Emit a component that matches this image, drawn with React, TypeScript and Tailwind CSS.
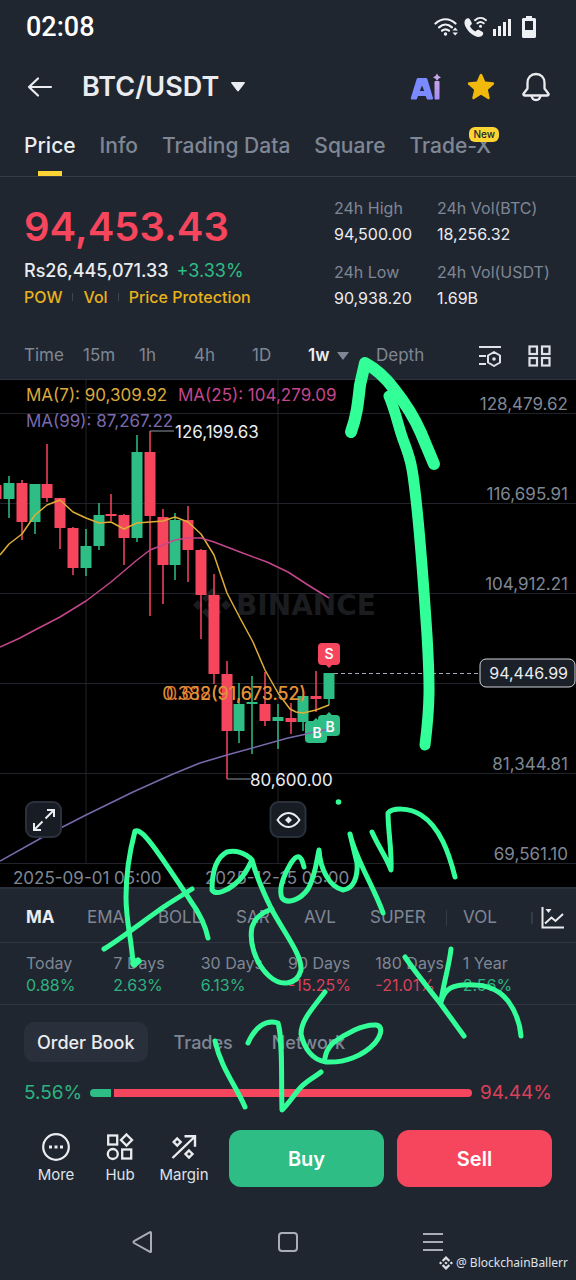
import { useState } from 'react'
import clsx from 'clsx'

interface Candle {
  up: boolean
  high: number
  top: number
  bottom: number
  low: number
}

// [direction, high, body top, body bottom, low]
const RAW: [string, number, number, number, number][] = [
  ['d', 105, 105, 119, 119],
  ['u', 96, 103, 119, 138],
  ['d', 100, 103, 142, 160],
  ['u', 104, 104, 142, 154],
  ['d', 64, 104, 118, 122],
  ['d', 118, 118, 148, 169],
  ['d', 147, 148, 188, 195],
  ['u', 149, 166, 188, 196],
  ['u', 123, 135, 166, 170],
  ['d', 114, 134, 136, 141],
  ['d', 134, 135, 158, 185],
  ['u', 55, 72, 158, 162],
  ['d', 51, 72, 136, 236],
  ['d', 129, 137, 185, 224],
  ['u', 133, 140, 185, 200],
  ['d', 126, 140, 170, 202],
  ['d', 169, 170, 215, 259],
  ['d', 194, 215, 294, 304],
  ['d', 281, 294, 351, 399],
  ['u', 303, 324, 351, 363],
  ['u', 296, 322, 324, 374],
  ['d', 292, 324, 341, 346],
  ['u', 324, 337, 341, 369],
  ['d', 323, 338, 342, 354],
  ['u', 316, 316, 342, 351],
  ['d', 291, 316, 319, 332],
  ['u', 293, 293, 319, 325],
]

const CANDLES: Candle[] = RAW.map(([dir, high, top, bottom, low]) => ({ up: dir === 'u', high, top, bottom, low }))

const MA7 =
  '0,175 9,164 22,154 35,135 47,125 60,120 73,132 86,138 99,143 111,142 124,149 137,143 150,142 163,141 175,137 188,142 201,154 214,175 227,213 240,238 253,262 265,290 278,313 290,329 296,332 303,333 316,330 329,325'
const MA25 =
  '0,267 20,258 35,250 60,237 86,221 111,202 124,191 137,180 150,170 163,165 175,160 188,158 201,158 214,162 240,172 267,182 288,192 308,205 329,218'
const MA99 = '0,481 43,457 86,435 133,412 173,394 200,383 227,375 288,358 316,352 329,349'

const GRID = [
  { y: 33, label: '128,479.62' },
  { y: 123, label: '116,695.91' },
  { y: 213, label: '104,912.21' },
  { y: 303, label: '' },
  { y: 393, label: '81,344.81' },
  { y: 483, label: '69,561.10' },
]

const TABS = ['Price', 'Info', 'Trading Data', 'Square', 'Trade-X']
const INTERVALS = ['Time', '15m', '1h', '4h', '1D', '1w', 'Depth']
const INDICATORS = ['MA', 'EMA', 'BOLL', 'SAR', 'AVL', 'SUPER']
const BOOK_TABS = ['Order Book', 'Trades', 'Network']

const STATS = [
  ['24h High', '94,500.00'],
  ['24h Vol(BTC)', '18,256.32'],
  ['24h Low', '90,938.20'],
  ['24h Vol(USDT)', '1.69B'],
]

const RETURNS = [
  ['Today', '0.88%'],
  ['7 Days', '2.63%'],
  ['30 Days', '6.13%'],
  ['90 Days', '-15.25%'],
  ['180 Days', '-21.01%'],
  ['1 Year', '2.56%'],
]

function StatusBar() {
  return (
    <div className="flex h-[54px] items-center justify-between pl-[26px] pr-10">
      <span className="font-['Roboto',sans-serif] text-[27px] font-medium text-white">02:08</span>
      <div className="flex items-center gap-[6px] text-[#eef0f4]">
        <svg width="24" height="20" viewBox="0 0 24 20" fill="none" stroke="currentColor" strokeWidth="2.2" strokeLinecap="round">
          <path d="M1.5 6.5C7.5.8 15.5.8 21.5 6.5" />
          <path d="M5 10.3c4-3.5 9-3.5 13 0" />
          <path d="M8 13.7c2.2-1.8 4.8-1.8 7 0" />
          <circle cx="11.5" cy="17" r="1.7" fill="currentColor" stroke="none" />
          <path d="m18.5 13.500 2.700-3 2.700 3zM18.500 15.500l2.700 3 2.700-3z" fill="currentColor" stroke="none" />
        </svg>
        <svg width="23" height="22" viewBox="0 0 23 22" fill="none">
          <path
            d="M1.800 3.200C3 2 5 1.800 5.800 3.200l1.800 3.300c.5 1 .2 1.800-.7 2.600l-1 .9c1.200 2.400 3.100 4.300 5.600 5.500l1-1c.8-.8 1.700-1 2.600-.5l3.200 1.800c1.300.8 1.200 2.600 0 3.800-1.800 1.800-4.500 1.800-7.300.5C6.800 18.100 3 14.300 1.200 10 .100 7.200.200 4.800 1.800 3.200z"
            fill="currentColor"
          />
          <path d="M11 4.200c3.300-3 7.700-3 11 0M13.400 7.300c2-1.700 4.300-1.700 6.300 0" stroke="currentColor" strokeWidth="1.9" strokeLinecap="round" />
          <circle cx="16.5" cy="10.2" r="1.5" fill="currentColor" />
        </svg>
        <svg width="19" height="18" viewBox="0 0 19 18" fill="currentColor">
          <path d="M0 11h3v7H0zM5 8h3v10H5zM10 4h3v14h-3zM15 1h3v17h-3z" />
        </svg>
        <svg className="ml-1" width="14" height="22" viewBox="0 0 14 22" fill="currentColor">
          <path fillRule="evenodd" d="M4 0h6v2h2.500c.8 0 1.500.7 1.500 1.500v17c0 .8-.7 1.500-1.500 1.500h-11C.700 22 0 21.300 0 20.500v-17C0 2.700.700 2 1.500 2H4zM3 5v9h8V5z" />
        </svg>
      </div>
    </div>
  )
}

function Header() {
  return (
    <header className="flex h-[66px] items-center pl-[27px] pr-[26px]">
      <button aria-label="Back" className="mr-[29px]">
        <svg width="26" height="22" viewBox="0 0 26 22" fill="none" stroke="#eaecef" strokeWidth="2.2" strokeLinecap="round" strokeLinejoin="round">
          <path d="M2 11h22M11 2.500 2 11l9 8.500" />
        </svg>
      </button>
      <button className="flex items-center gap-3 text-[27px] font-semibold text-[#eaecef]">
        BTC/USDT
        <svg width="14" height="10" viewBox="0 0 14 10" fill="currentColor">
          <path d="M.8 0h12.400c.8 0 1 .7.5 1.200L7.800 9c-.4.6-1.100.6-1.600 0L.3 1.200C-.2.7 0 0 .8 0z" />
        </svg>
      </button>
      <div className="ml-auto flex items-center gap-[25px]">
        <button aria-label="AI assistant">
          <svg width="32" height="30" viewBox="0 0 32 30">
            <defs>
              <linearGradient id="ai-i" x1="0" y1="0" x2="0" y2="1">
                <stop offset="0" stopColor="#c9a2ea" />
                <stop offset="1" stopColor="#a58cf5" />
              </linearGradient>
            </defs>
            <path fillRule="evenodd" fill="#7b8bff" d="M8.500 6h7c1 0 1.700.5 2 1.400L23 26c.2.9-.3 1.500-1.200 1.500H18c-.8 0-1.200-.4-1.500-1.200l-.8-2.300H8l-.8 2.300c-.3.8-.7 1.200-1.500 1.200H2c-.9 0-1.400-.6-1.200-1.500L6.500 7.400C6.800 6.500 7.500 6 8.500 6zM12 13.500 9.800 19h4.400z" />
            <rect x="24.500" y="9" width="5" height="18.500" rx="1" fill="url(#ai-i)" />
            <path d="M27 1.500l1.500 2.500 2.500 1.300-2.500 1.400-1.500 2-1.500-2-2.500-1.400L25.500 4z" fill="#c7a6ec" />
          </svg>
        </button>
        <button aria-label="Favourite">
          <svg width="28" height="28" viewBox="0 0 28 28">
            <path
              d="M12.800 1.600c.5-1 1.900-1 2.400 0l3 7 7.800.7c1.200.1 1.600 1.500.8 2.300l-5.900 5.200 1.800 7.900c.2 1.100-.9 1.900-1.900 1.300L14 21.800 7.200 26c-1 .6-2.100-.2-1.900-1.300l1.800-7.900-5.900-5.200c-.8-.8-.4-2.200.8-2.300l7.800-.7z"
              fill="#f0b90b"
            />
          </svg>
        </button>
        <button aria-label="Price alerts" className="ml-[2px]">
          <svg width="28" height="30" viewBox="0 0 28 30" fill="none" stroke="#eaecef" strokeWidth="2.3" strokeLinejoin="round">
            <path d="M14 2c5.200 0 8.500 3.700 8.500 8.700v5.800l3.800 5c.7 1 .2 2-.9 2H2.600c-1.100 0-1.600-1-.9-2l3.800-5v-5.800C5.500 5.700 8.800 2 14 2z" />
            <path d="M9.500 24c.6 2.600 2.300 4 4.500 4s3.900-1.400 4.500-4" />
          </svg>
        </button>
      </div>
    </header>
  )
}

function Tabs() {
  const [active, setActive] = useState('Price')
  return (
    <nav className="flex h-[57px] items-stretch gap-6 border-b border-[#333b47] px-6">
      {TABS.map(tab => (
        <button
          key={tab}
          onClick={() => setActive(tab)}
          className={clsx('relative whitespace-nowrap pb-1 text-[21px] font-medium', tab === active ? 'text-[#eaecef]' : 'text-[#7f8794]')}
        >
          {tab}
          {tab === active && <span className="absolute bottom-0 left-1/2 h-[5px] w-6 -translate-x-1/2 bg-[#fcd535]" />}
          {tab === 'Trade-X' && (
            <span className="absolute -right-2 top-[7px] rounded-[6px] bg-[#fcd535] px-1 text-[10px] font-medium leading-[15px] text-[#202630]">New</span>
          )}
        </button>
      ))}
    </nav>
  )
}

function PriceSummary() {
  return (
    <section className="flex h-[154px] justify-between pl-6 pr-[23px]">
      <div className="pt-[23px]">
        <div className="text-[40px] font-semibold leading-[54px] text-[#f6465d]">94,453.43</div>
        <div className="mt-1 flex gap-2 text-[18px] leading-[26px]">
          <span className="font-medium text-[#eaecef]">Rs26,445,071.33</span>
          <span className="text-[#2ebd85]">+3.33%</span>
        </div>
        <div className="flex items-center text-[16px] font-medium leading-[26px] text-[#e8b21c]">
          <a href="#pow">POW</a>
          <span className="mx-[10px] h-2 w-px bg-[#3c4553]" />
          <a href="#vol">Vol</a>
          <span className="mx-[10px] h-2 w-px bg-[#3c4553]" />
          <a href="#protection">Price Protection</a>
        </div>
      </div>
      <dl className="grid w-[219px] grid-cols-[103px_1fr] content-start gap-y-3 pt-[18px] text-[16px] leading-[26px]">
        {STATS.map(([label, value]) => (
          <div key={label} className="whitespace-nowrap">
            <dt className="text-[#7f8794]">{label}</dt>
            <dd className="text-[#eaecef]">{value}</dd>
          </div>
        ))}
      </dl>
    </section>
  )
}

function Intervals() {
  const [active, setActive] = useState('1w')
  return (
    <div className="flex h-[49px] items-center border-b border-[#2b323d] pl-6 pr-[25px] pt-[2px]">
      <div className="grid grid-cols-[59px_56px_55px_58px_56px_68px_56px] text-[17px]">
        {INTERVALS.map(item => (
          <button
            key={item}
            onClick={() => setActive(item)}
            className={clsx('flex items-center gap-2', item === active ? 'font-semibold text-[#eaecef]' : 'text-[#7f8794]')}
          >
            {item}
            {item === '1w' && (
              <svg width="12" height="8" viewBox="0 0 12 8" fill="#7f8794">
                <path d="M0 0h12L6 8z" />
              </svg>
            )}
          </button>
        ))}
      </div>
      <div className="ml-auto flex items-center gap-[26px]">
        <button aria-label="Chart settings">
          <svg width="24" height="22" viewBox="0 0 24 22" fill="none" stroke="#dfe2e8" strokeWidth="2">
            <path d="M1 2h22M1 11h7M1 19h7" />
            <path d="m16 7 6 3.500v7L16 21l-6-3.500v-7z" strokeLinejoin="round" />
            <circle cx="16" cy="14" r="1.800" fill="#dfe2e8" stroke="none" />
          </svg>
        </button>
        <button aria-label="Layout">
          <svg width="23" height="22" viewBox="0 0 23 22" fill="none" stroke="#dfe2e8" strokeWidth="2.2">
            <rect x="1.500" y="1.500" width="7.500" height="7.500" />
            <rect x="14" y="1.500" width="7.500" height="7.500" />
            <rect x="1.500" y="13" width="7.500" height="7.500" />
            <rect x="14" y="13" width="7.500" height="7.500" />
          </svg>
        </button>
      </div>
    </div>
  )
}

function Chart() {
  return (
    <section className="relative bg-black">
      <svg className="block h-auto w-full font-['Inter',sans-serif]" viewBox="0 0 576 507" role="img" aria-label="BTC/USDT weekly chart">
        <g stroke="#20242a" strokeWidth="1">
          {GRID.map(g => (
            <path key={g.y} d={`M0 ${g.y + 0.5}H576`} />
          ))}
          <path d="M86 0V483M278 0V483" />
        </g>

        {/* logo mark behind the candles */}
        <g fill="#1b1c1f">
          <path d="M212 208l10 10-4 4-6-6-6 6-4-4zM212 242l10-10-4-4-6 6-6-6-4 4zM212 220l5 5-5 5-5-5zM198 220l5 5-5 5-5-5zM226 220l5 5-5 5-5-5z" />
          <text x="236" y="235" className="font-['DejaVu_Sans',sans-serif] text-[28px] font-bold">BINANCE</text>
        </g>

        {CANDLES.map((c, i) => {
          const x = Math.round((i - 1) * 12.8 + 9)
          return (
            <g key={i} fill={c.up ? '#2ebd85' : '#f6465d'}>
              <rect x={x - 0.75} y={c.high} width="1.5" height={c.low - c.high} />
              <rect x={x - 5.5} y={c.top} width="11" height={c.bottom - c.top} />
            </g>
          )
        })}

        <g fill="none" strokeWidth="1.5" strokeLinejoin="round">
          <polyline points={MA7} stroke="#dfad34" />
          <polyline points={MA25} stroke="#c4468c" />
          <polyline points={MA99} stroke="#7a69ac" />
        </g>

        <g fontSize="17">
          <text x="26" y="21" fill="#dba93c">MA(7): 90,309.92</text>
          <text x="178" y="21" fill="#c4468c">MA(25): 104,279.09</text>
          <text x="26" y="47" fill="#7a69ac">MA(99): 87,267.22</text>
          <path d="M150 51H174M227 399H251" stroke="#8d95a3" />
          <text x="175" y="58" fill="#eaecef">126,199.63</text>
          <text x="250" y="406" fill="#eaecef">80,600.00</text>
          {/* two retracement levels share the same price */}
          <g fontSize="18" textAnchor="end">
            <text x="306" y="320" fill="#dd6f2e">0.618(91,673.52)</text>
            <text x="306" y="320" fill="#e0923a">0.382(91,673.52)</text>
          </g>
          <g fill="#7f8794">
            {GRID.map(g => (
              <text key={g.y} x="568" y={g.y - 3} textAnchor="end">{g.label}</text>
            ))}
            <text x="13" y="504">2025-09-01 05:00</text>
            <text x="205" y="504">2025-12-15 05:00</text>
          </g>
        </g>

        {/* trade markers */}
        <g fontSize="14" fontWeight="600" textAnchor="middle" fill="#fff">
          <path d="M322 263h14a4 4 0 0 1 4 4v14a4 4 0 0 1-4 4h-4l-3 3-3-3h-4a4 4 0 0 1-4-4v-14a4 4 0 0 1 4-4z" fill="#f6465d" />
          <path d="M309 341h4l3-3 3 3h4a4 4 0 0 1 4 4v14a4 4 0 0 1-4 4h-14a4 4 0 0 1-4-4v-14a4 4 0 0 1 4-4z" fill="#2ebd85" />
          <path d="M322 335h4l3-3 3 3h4a4 4 0 0 1 4 4v13a4 4 0 0 1-4 4h-14a4 4 0 0 1-4-4v-13a4 4 0 0 1 4-4z" fill="#2ebd85" />
          <path d="M305 354l24-5" stroke="#7a69ac" strokeWidth="1.5" />
          <text x="329" y="279">S</text>
          <text x="317" y="358">B</text>
          <text x="330" y="352">B</text>
        </g>

        {/* last price */}
        <path d="M334 293.5H480" stroke="#a3a9b4" strokeDasharray="4 3" />
        <rect x="480" y="279" width="95" height="28" rx="6" fill="#1b2029" stroke="#cfd3da" />
        <text x="568" y="299" fontSize="16" textAnchor="end" fill="#eaecef">94,446.99</text>
      </svg>

      <button aria-label="Full screen" className="absolute bottom-[49px] left-[25px] flex size-[37px] items-center justify-center rounded-[9px] border-2 border-[#2b313c] bg-[#181c24]">
        <svg width="24" height="24" viewBox="0 0 24 24" fill="none" stroke="#eaecef" strokeWidth="2">
          <path d="M13.500 10.500 22 2M15 2h7v7M10.500 13.500 2 22M9 22H2v-7" />
        </svg>
      </button>
      <button aria-label="Show drawings" className="absolute bottom-[49px] left-1/2 flex size-[37px] -translate-x-1/2 items-center justify-center rounded-[9px] border-2 border-[#2b313c] bg-[#181c24]">
        <svg className="shrink-0" width="26" height="18" viewBox="0 0 26 18" fill="none" stroke="#eaecef" strokeWidth="2" strokeLinejoin="round">
          <path d="M2 9c3-4.500 6.500-7 11-7s8 2.500 11 7c-3 4.500-6.500 7-11 7S5 13.500 2 9z" />
          <path d="m13 5.500 3.500 3.500-3.500 3.500L9.500 9z" fill="#eaecef" stroke="none" />
        </svg>
      </button>
    </section>
  )
}

function Indicators() {
  return (
    <div className="flex h-14 items-center border-b border-t-2 border-b-[#2f3742] border-t-[#2a313c] pl-[26px] pr-3 pt-1 text-[17px] text-[#7f8794]">
      <div className="grid grid-cols-[61px_71px_78px_68px_66px_76px_1fr] text-left">
        {INDICATORS.map(name => (
          <button key={name} className={clsx('text-left', name === 'MA' && 'font-bold text-[#eaecef]')}>
            {name}
          </button>
        ))}
        <button className="flex items-center gap-4">
          <span className="h-4 w-px bg-[#343c48]" />
          VOL
        </button>
      </div>
      <span className="ml-auto mr-2 h-3 w-[2px] bg-[#343c48]" />
      <button aria-label="Indicator settings">
        <svg width="23" height="22" viewBox="0 0 23 22" fill="none" stroke="#eaecef" strokeWidth="2">
          <path d="M1.500 0v20.500H23M4 16.500l6.500-6 4 3.500L22 7" />
          <path d="M4.500 2h6l-3 4z" fill="#eaecef" stroke="none" />
        </svg>
      </button>
    </div>
  )
}

function Returns() {
  return (
    <dl className="grid h-[62px] grid-cols-6 border-b border-[#2f3742] px-[26px] pt-[9px] text-[16px] leading-[22px]">
      {RETURNS.map(([label, value]) => (
        <div key={label} className="whitespace-nowrap">
          <dt className="text-[#7f8794]">{label}</dt>
          <dd className={value.startsWith('-') ? 'text-[#d9415a]' : 'text-[#2cb37f]'}>{value}</dd>
        </div>
      ))}
    </dl>
  )
}

function OrderBook() {
  const [active, setActive] = useState('Order Book')
  return (
    <section className="px-6 pt-[17px]">
      <div className="flex gap-[13px] text-[18px] font-medium">
        {BOOK_TABS.map(tab => (
          <button
            key={tab}
            onClick={() => setActive(tab)}
            className={clsx('h-10 rounded-[10px] px-[13px]', tab === active ? 'bg-[#2a303b] text-[#eaecef]' : 'text-[#7f8794]')}
          >
            {tab}
          </button>
        ))}
      </div>
      <div className="mt-[15px] flex h-8 items-center gap-2 text-[19px]">
        <span className="text-[#2cb37f]">5.56%</span>
        <div className="flex h-2 flex-1 gap-[3px]">
          <span className="rounded-l-full bg-[#2ebd85]" style={{ width: '5.56%' }} />
          <span className="flex-1 rounded-r-full bg-[#f6465d]" />
        </div>
        <span className="text-[#d9415a]">94.44%</span>
      </div>
    </section>
  )
}

function ActionBar() {
  return (
    <div className="mt-[21px] flex h-[57px] items-stretch gap-[13px] px-6">
      <div className="grid w-48 grid-cols-3 text-[15px] leading-[22px] text-[#dfe2e8]">
        <button className="flex flex-col items-center gap-[2px] pt-[2px]">
          <svg width="30" height="30" viewBox="0 0 30 30" fill="none" stroke="#eaecef" strokeWidth="2.2">
            <circle cx="15" cy="15" r="12.800" />
            <path d="M8 13.500h3v3H8zM13.500 13.500h3v3h-3zM19 13.500h3v3h-3z" fill="#eaecef" stroke="none" />
          </svg>
          More
        </button>
        <button className="flex flex-col items-center gap-[2px] pt-[2px]">
          <svg width="30" height="30" viewBox="0 0 30 30" fill="none" stroke="#eaecef" strokeWidth="2.3">
            <rect x="3.200" y="3.500" width="9" height="9" />
            <path d="m21.500 2.500 5.500 5.500-5.500 5.500L16 8z" />
            <circle cx="7.800" cy="22" r="5" />
            <rect x="17.200" y="17.500" width="9" height="9" />
          </svg>
          Hub
        </button>
        <button className="flex flex-col items-center gap-[2px] pt-[2px]">
          <svg width="30" height="30" viewBox="0 0 30 30" fill="none" stroke="#eaecef" strokeWidth="2.4">
            <path d="M3.500 26 26 4.500M15.500 4.200H26v10.500" />
            <path d="m8.200 6.500 3.500 3.500-3.500 3.500L4.700 10zM20 18.500l3.500 3.500-3.500 3.500-3.500-3.500z" />
          </svg>
          Margin
        </button>
      </div>
      <button className="flex-1 rounded-[12px] bg-[#2ebd85] text-[20px] font-semibold text-white">Buy</button>
      <button className="flex-1 rounded-[12px] bg-[#f6465d] text-[20px] font-semibold text-white">Sell</button>
    </div>
  )
}

function SystemNav() {
  return (
    <div className="relative flex h-[93px] px-[71px] pt-11">
      <button aria-label="System back" className="flex flex-1 justify-center">
        <svg width="22" height="22" viewBox="0 0 22 22" fill="none" stroke="#a9adb8" strokeWidth="2" strokeLinejoin="round">
          <path d="M19 1.500v19c0 .5-.5.700-1 .400L2 12c-.700-.5-.700-1.300 0-1.800L18 1.200c.5-.3 1-.1 1 .3z" />
        </svg>
      </button>
      <button aria-label="System home" className="flex flex-1 justify-center">
        <svg width="22" height="22" viewBox="0 0 22 22" fill="none" stroke="#a9adb8" strokeWidth="2">
          <rect x="2" y="2" width="18" height="18" rx="3" />
        </svg>
      </button>
      <button aria-label="System recents" className="flex flex-1 justify-center">
        <svg width="22" height="22" viewBox="0 0 22 22" fill="none" stroke="#a9adb8" strokeWidth="2">
          <path d="M1 3h20M1 11h20M1 19h20" />
        </svg>
      </button>
      <div className="absolute bottom-2 right-2 flex items-center gap-[3px] font-['Noto_Sans',sans-serif] text-[12px] leading-[18px] text-[#dfe1e6]">
        <svg width="14" height="14" viewBox="0 0 14 14" fill="currentColor">
          <path d="M7 0l4.200 4.200-1.600 1.600L7 3.200 4.400 5.800 2.800 4.200zM7 14l4.200-4.200-1.600-1.600L7 10.800 4.400 8.200 2.800 9.800zM7 5.400 8.600 7 7 8.600 5.400 7zM1.600 5.400 3.200 7 1.600 8.600 0 7zM12.400 5.400 14 7l-1.600 1.600L10.800 7z" />
        </svg>
        @ BlockchainBallerr
      </div>
    </div>
  )
}

// freehand notes drawn on top of the whole screen
function Doodle() {
  return (
    <svg
      className="pointer-events-none absolute left-0 top-0 h-auto w-full"
      viewBox="0 0 576 1280"
      fill="none"
      stroke="#33ff99"
      strokeWidth="5"
      strokeLinecap="round"
      strokeLinejoin="round"
      aria-hidden="true"
    >
      {/* arrow */}
      <path strokeWidth="12" d="M351 432C357 415 358 403 360 385L365 363C378 370 386 378 394 389C406 404 414 417 421 433L434 464" />
      <path strokeWidth="11" d="M389 396C396 412 399 430 404 442C410 458 412 466 414 483C419 520 424 590 427 635C430 685 430 705 425 745" />
      {/* Again */}
      <path d="M133 963C131 935 126 922 126 897C126 870 130 850 135 831C140 829 147 838 153 846C165 862 178 882 190 900C200 914 206 928 208 938" />
      <path d="M104 949C122 938 150 916 168 904L192 889" />
      <path strokeWidth="7" d="M134 964l4-3" />
      <path d="M252 860C246 853 236 850 227 852C215 858 212 873 212 890C216 896 228 890 235 884C244 877 248 868 252 860C256 875 264 894 272 910C285 934 302 955 301 970C297 985 281 987 269 976C255 963 249 942 252 927C255 917 263 912 272 909" />
      <path d="M304 867C301 854 297 854 291 863C284 875 278 889 282 898C288 905 301 899 308 889C315 877 316 864 319 850C320 868 329 887 343 890C354 889 358 876 357 863L350 834C356 860 374 887 383 913" />
      <circle cx="338.500" cy="802" r="2.800" fill="#33ff99" stroke="none" />
      <path d="M372 832C378 846 387 858 391 870C392 850 388 831 388 813C392 808 409 807 421 815C440 827 449 853 455 877" />
      {/* 126 h */}
      <path d="M215 1041C221 1068 236 1086 245 1107" />
      <path d="M248 1043C255 1027 266 1019 278 1023C283 1040 281 1075 282 1110C289 1103 293 1096 301 1087C308 1080 315 1077 321 1072" />
      <path d="M325 992C311 1010 301 1021 301 1034C304 1048 312 1060 326 1062C345 1063 363 1056 375 1043C382 1034 383 1026 376 1025C363 1024 345 1034 333 1043C327 1049 326 1053 325 1058" />
      <path d="M405 957C416 973 428 988 440 1003L464 1036" />
      <path d="M451 949C449 967 443 985 441 1002C444 991 450 986 462 985C483 984 497 987 508 1001C517 1013 520 1024 521 1036" />
    </svg>
  )
}

export default function App() {
  return (
    <main className="relative min-h-screen bg-[#202630] font-['Inter',sans-serif] text-[#eaecef]">
      <StatusBar />
      <Header />
      <Tabs />
      <PriceSummary />
      <Intervals />
      <Chart />
      <Indicators />
      <Returns />
      <OrderBook />
      <ActionBar />
      <SystemNav />
      <Doodle />
    </main>
  )
}
